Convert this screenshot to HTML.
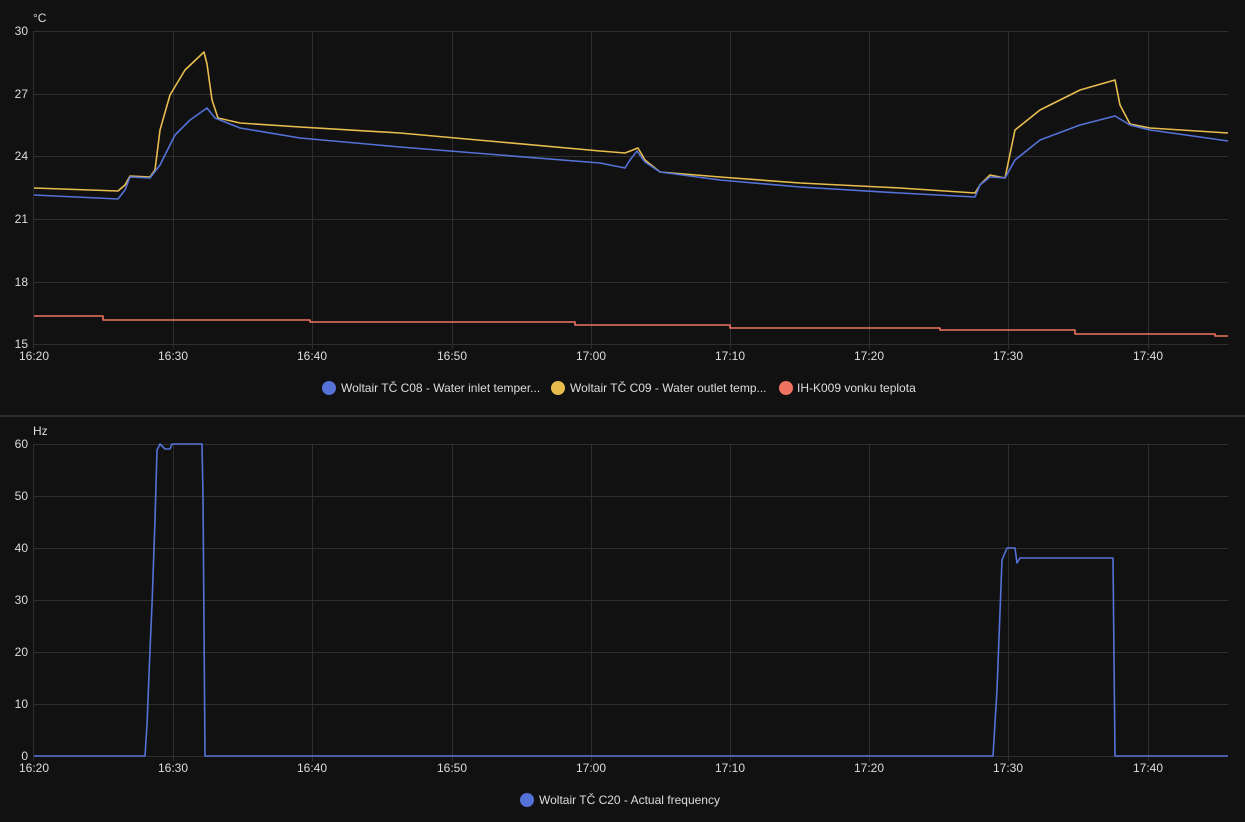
<!DOCTYPE html><html><head><meta charset="utf-8"><style>
body{margin:0;background:#111;width:1245px;height:817px;overflow:hidden;font-family:"Liberation Sans","Noto Sans CJK SC",sans-serif}
svg text{font-family:"Liberation Sans",sans-serif;font-size:12px;fill:#ddd}
</style></head><body>
<svg width="1245" height="817" xmlns="http://www.w3.org/2000/svg">
<rect width="1245" height="817" fill="#111"/>
<g stroke="#2e2e2e" stroke-width="1">
<line x1="34" x2="1228" y1="31.5" y2="31.5"/><line x1="34" x2="1228" y1="94.5" y2="94.5"/><line x1="34" x2="1228" y1="156.5" y2="156.5"/><line x1="34" x2="1228" y1="219.5" y2="219.5"/><line x1="34" x2="1228" y1="282.5" y2="282.5"/><line x1="34" x2="1228" y1="344.5" y2="344.5"/>
<line x1="34" x2="1228" y1="444.5" y2="444.5"/><line x1="34" x2="1228" y1="496.5" y2="496.5"/><line x1="34" x2="1228" y1="548.5" y2="548.5"/><line x1="34" x2="1228" y1="600.5" y2="600.5"/><line x1="34" x2="1228" y1="652.5" y2="652.5"/><line x1="34" x2="1228" y1="704.5" y2="704.5"/><line x1="34" x2="1228" y1="756.5" y2="756.5"/>
<path d="M33.5 31V349M173.5 31V349M312.5 31V349M452.5 31V349M591.5 31V349M730.5 31V349M869.5 31V349M1008.5 31V349M1148.5 31V349"/>
<path d="M33.5 444V761M173.5 444V761M312.5 444V761M452.5 444V761M591.5 444V761M730.5 444V761M869.5 444V761M1008.5 444V761M1148.5 444V761"/>
</g>
<line x1="0" x2="1245" y1="416" y2="416" stroke="#2c2c2c" stroke-width="2"/>
<text x="33" y="22">°C</text>
<g text-anchor="end"><text x="28" y="35">30</text><text x="28" y="98">27</text><text x="28" y="160">24</text><text x="28" y="223">21</text><text x="28" y="286">18</text><text x="28" y="348">15</text>
<text x="28" y="448">60</text><text x="28" y="500">50</text><text x="28" y="552">40</text><text x="28" y="604">30</text><text x="28" y="656">20</text><text x="28" y="708">10</text><text x="28" y="760">0</text></g>
<text x="33" y="435">Hz</text>
<g text-anchor="middle"><text x="34" y="360">16:20</text><text x="173" y="360">16:30</text><text x="312" y="360">16:40</text><text x="452" y="360">16:50</text><text x="591" y="360">17:00</text><text x="730" y="360">17:10</text><text x="869" y="360">17:20</text><text x="1008" y="360">17:30</text><text x="1148" y="360">17:40</text>
<text x="34" y="772">16:20</text><text x="173" y="772">16:30</text><text x="312" y="772">16:40</text><text x="452" y="772">16:50</text><text x="591" y="772">17:00</text><text x="730" y="772">17:10</text><text x="869" y="772">17:20</text><text x="1008" y="772">17:30</text><text x="1148" y="772">17:40</text></g>
<g fill="none" stroke-width="1.6" stroke-linejoin="round">
<polyline stroke="#f07261" points="34,316 103,316 103,320 310,320 310,322 575,322 575,325 730,325 730,328 940,328 940,330 1075,330 1075,334 1215,334 1215,336 1228,336"/>
<polyline stroke="#e8bd4e" points="34,188 118,191 125,185 130,176 150,177 155,170 160,130 170,95 185,70 204,52 207,64 212,100 218,118 240,123 300,127 400,133 500,142 600,151 625,153 638,148 645,160 660,172 720,177 800,183 900,188 975,193 980,185 990,175 1005,178 1015,130 1040,110 1080,90 1115,80 1120,105 1130,124 1150,128 1228,133"/>
<polyline stroke="#5572d8" points="34,195 118,199 125,190 130,177 150,178 160,165 175,135 190,120 207,108 215,118 240,128 300,138 400,147 500,155 600,163 625,168 630,160 637,151 645,162 660,172 720,180 800,187 900,193 975,197 980,185 990,177 1005,178 1015,160 1040,140 1080,125 1115,116 1130,125 1150,130 1200,137 1228,141"/>
<polyline stroke="#5572d8" points="34,756 145,756 147,725 150,650 152,605 155,520 157,450 160,444 165,449 170,449 172,444 202,444 203,497 205,756 993,756 997,690 1002,560 1007,548 1015,548 1017,563 1020,558 1113,558 1115,756 1228,756"/>
</g>
<circle cx="329" cy="388" r="7" fill="#5572d8"/><text x="341" y="392">Woltair TČ C08 - Water inlet temper...</text>
<circle cx="558" cy="388" r="7" fill="#e8bd4e"/><text x="570" y="392">Woltair TČ C09 - Water outlet temp...</text>
<circle cx="786" cy="388" r="7" fill="#f07261"/><text x="797" y="392">IH-K009 vonku teplota</text>
<circle cx="527" cy="800" r="7" fill="#5572d8"/><text x="539" y="804">Woltair TČ C20 - Actual frequency</text>
</svg>
</body></html>
